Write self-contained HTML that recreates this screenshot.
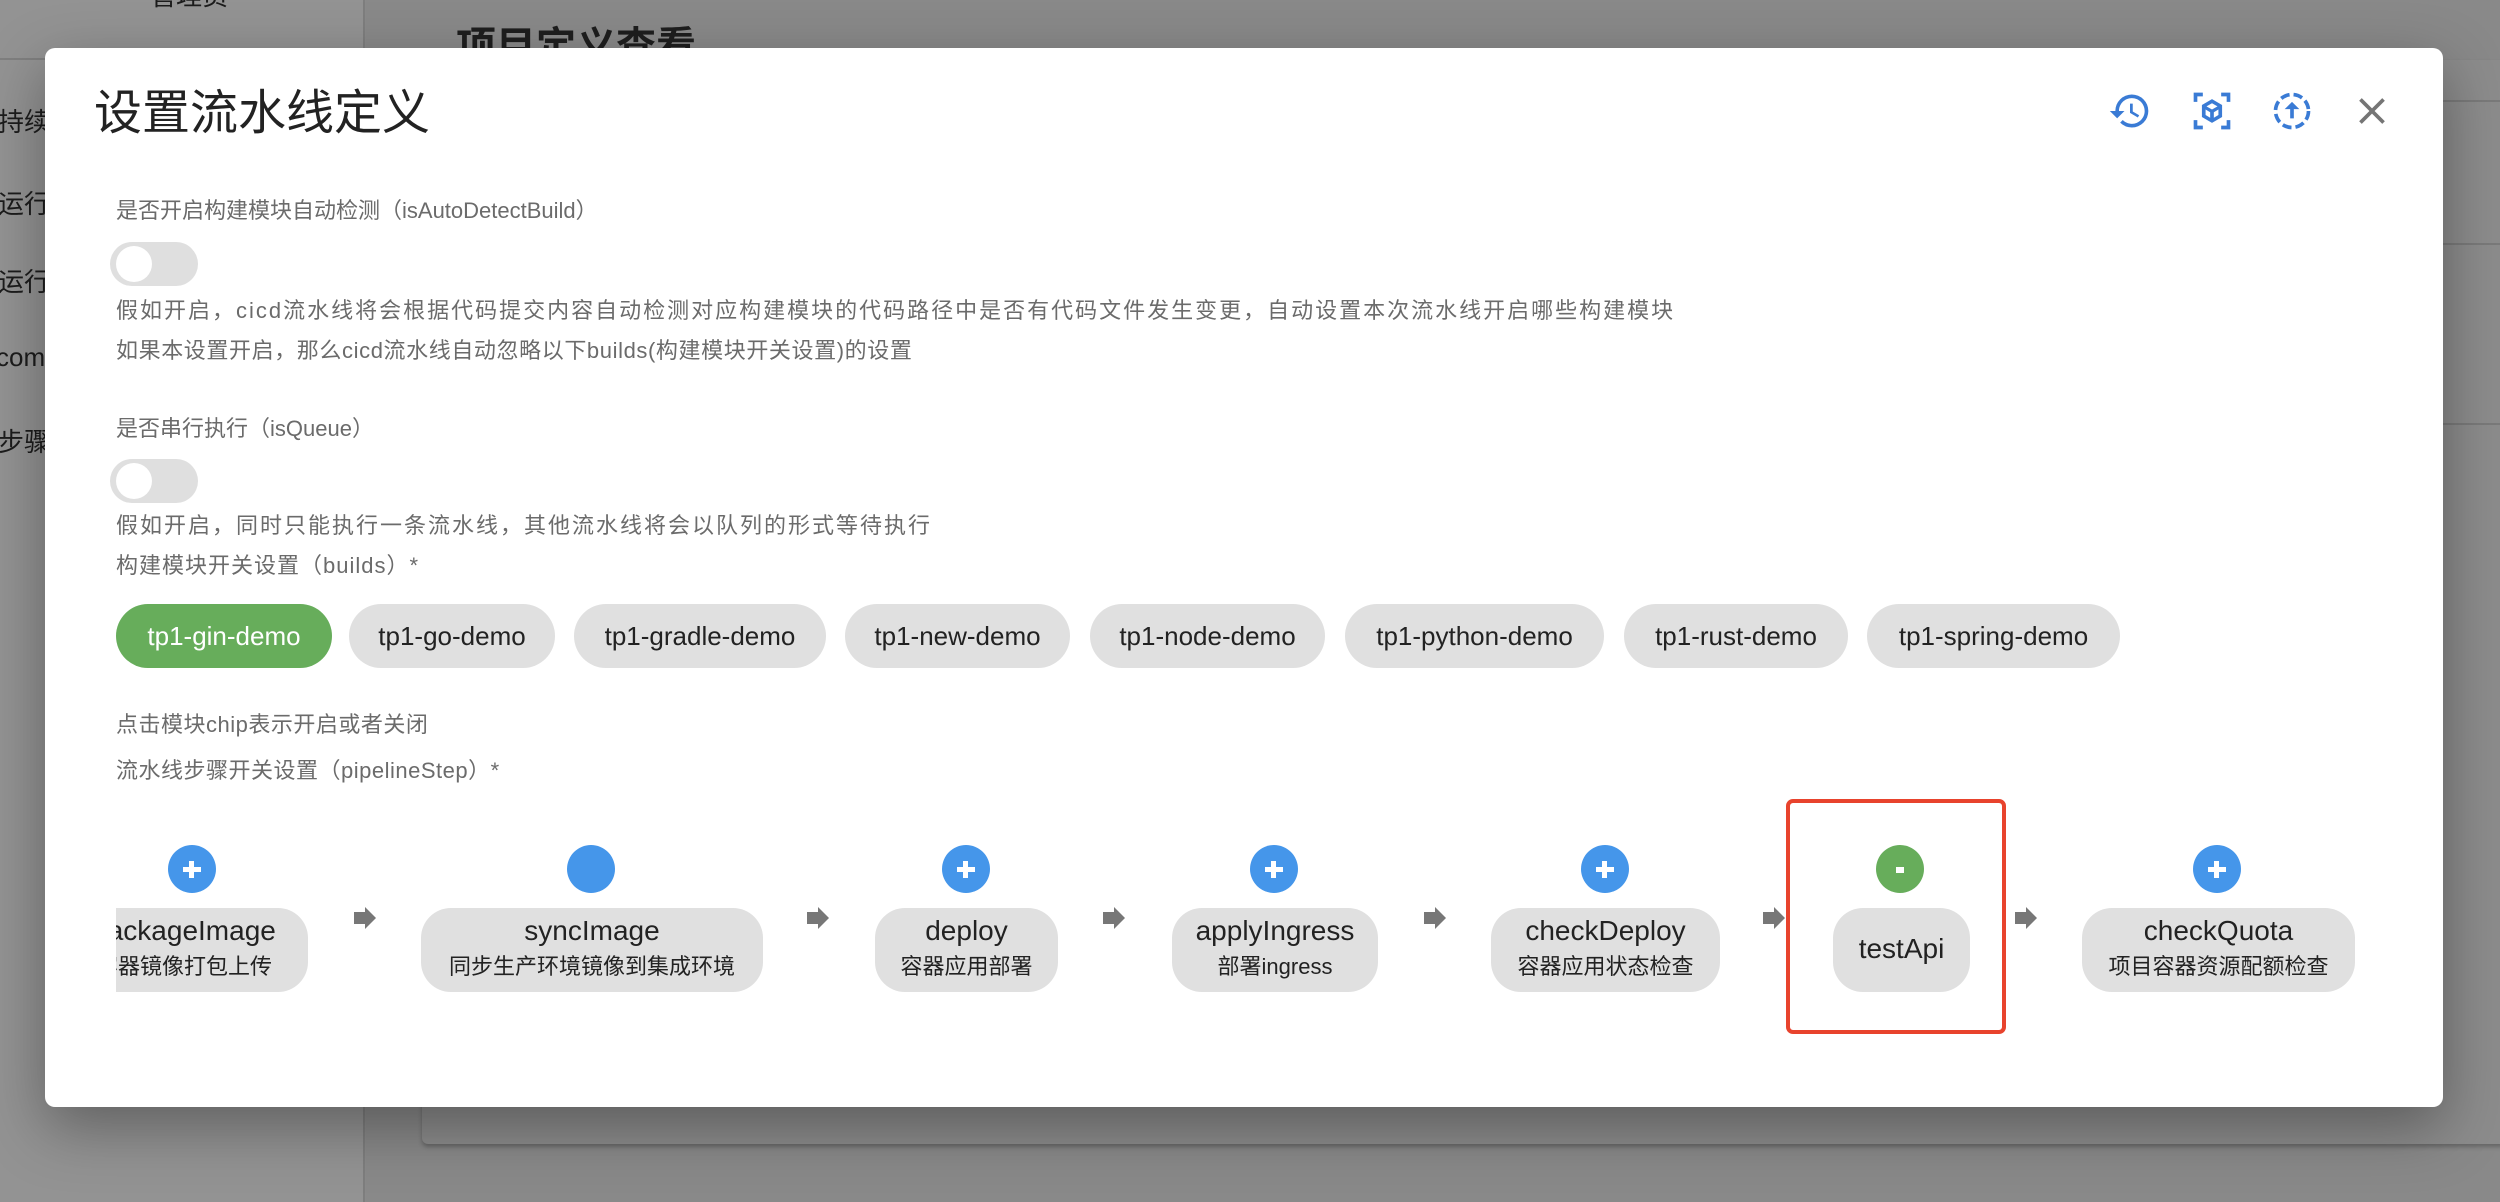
<!DOCTYPE html>
<html><head><meta charset="utf-8">
<style>
*{margin:0;padding:0;box-sizing:border-box}
html,body{background:#8a8a8a}
body{width:2500px;height:1202px;overflow:hidden;font-family:"Liberation Sans","Noto Sans CJK SC",sans-serif;position:relative}
.abs{position:absolute}
.side{left:0;top:0;width:365px;height:1202px;background:#939393;border-right:2px solid #7e7e7e}
.sidetxt{font-size:26px;color:#1c1c1c;white-space:nowrap}
.card{left:422px;top:60px;width:2100px;height:1084px;background:#8c8c8c;border-radius:6px;box-shadow:0 3px 4px rgba(0,0,0,.25)}
.dlg{left:45px;top:48px;width:2398px;height:1059px;background:#fff;border-radius:10px;box-shadow:0 20px 60px rgba(0,0,0,.35)}
.lbl{font-size:22px;color:#6b6b6b;white-space:nowrap;line-height:1}
.tog{width:88px;height:44px;border-radius:22px;background:#dfdfdf}
.tog i{position:absolute;left:6px;top:4px;width:36px;height:36px;border-radius:50%;background:#fff}
.chip{top:604px;height:64px;border-radius:32px;background:#e0e0e0;color:#222;font-size:26px;line-height:64px;text-align:center;white-space:nowrap}
.chip.on{background:#67ad5b;color:#fff}
.circ{width:48px;height:48px;border-radius:50%;background:#4596ea;top:845px}
.circ.p::before{content:"";position:absolute;left:15px;top:22px;width:18px;height:5px;background:#fff}
.circ.p::after{content:"";position:absolute;left:21px;top:16px;width:5px;height:17px;background:#fff}
.box{top:908px;height:84px;border-radius:30px;background:#e0e0e0;text-align:center;color:#222;white-space:nowrap;overflow:hidden}
.box b{display:block;font-weight:normal;font-size:28px;margin-top:6px;line-height:34px}
.box s{display:block;text-decoration:none;font-size:22px;line-height:30px;margin-top:4px}
.arr{top:907px;width:22px;height:22px}
</style></head><body>
<div class="abs side"></div>
<div class="abs" style="left:0;top:58px;width:365px;height:2px;background:#7f7f7f"></div>
<div class="abs sidetxt" style="left:150px;top:-24px">管理员</div>
<div class="abs sidetxt" style="left:-2px;top:102px">持续</div>
<div class="abs sidetxt" style="left:-2px;top:184px">运行</div>
<div class="abs sidetxt" style="left:-2px;top:262px">运行</div>
<div class="abs sidetxt" style="left:-4px;top:342px">com</div>
<div class="abs sidetxt" style="left:-2px;top:422px">步骤</div>
<div class="abs" style="left:366px;top:0;width:2134px;height:1202px;background:#898989"></div>
<div class="abs sidetxt" style="left:456px;top:14px;font-size:40px;font-weight:bold;color:#1e1e1e">项目定义查看</div>
<div class="abs card"></div>
<div class="abs" style="left:2443px;top:100px;width:57px;height:2px;background:#7a7a7a"></div>
<div class="abs" style="left:2443px;top:243px;width:57px;height:2px;background:#7a7a7a"></div>
<div class="abs" style="left:2443px;top:423px;width:57px;height:2px;background:#7a7a7a"></div>
<div class="abs dlg"></div>

<div class="abs" style="left:94px;top:84px;font-size:48px;color:#222;white-space:nowrap;line-height:60px">设置流水线定义</div>

<svg class="abs" style="left:2108px;top:89px" width="44" height="44" viewBox="0 0 24 24"><path fill="#3a7bd5" d="M13 3a9 9 0 0 0-9 9H1l3.890 3.890.07.14L9 12H6c0-3.870 3.130-7 7-7s7 3.130 7 7-3.130 7-7 7c-1.930 0-3.680-.79-4.940-2.060l-1.420 1.420A8.954 8.954 0 0 0 13 21a9 9 0 0 0 0-18zm-1 5v5l4.280 2.540.72-1.210-3.500-2.080V8H12z"/></svg>
<svg class="abs" style="left:2190px;top:89px" width="44" height="44" viewBox="0 0 24 24"><path fill="#3a7bd5" d="M2 2h5v2H4v3H2zm15 0h5v5h-2V4h-3zM2 17h2v3h3v2H2zm18 0h2v5h-5v-2h3zM12 5.5l5.5 3.2v6.6L12 18.5l-5.5-3.2V8.7zm0 2.3L9 9.5l3 1.7 3-1.7zm-3.5 3.4v3l2.5 1.5v-3zm7 0l-2.5 1.5v3l2.5-1.5z"/></svg>
<svg class="abs" style="left:2270px;top:89px" width="44" height="44" viewBox="0 0 24 24"><circle cx="12" cy="12" r="9" fill="none" stroke="#3a7bd5" stroke-width="2" stroke-dasharray="5 2.2"/><path fill="#3a7bd5" d="M12 7l-4 4h3v5h2v-5h3z"/></svg>
<svg class="abs" style="left:2350px;top:89px" width="44" height="44" viewBox="0 0 24 24"><path fill="#757575" d="M19 6.41L17.59 5 12 10.59 6.41 5 5 6.41 10.59 12 5 17.59 6.41 19 12 13.41 17.59 19 19 17.59 13.410 12z"/></svg>

<div class="abs lbl" style="left:116px;top:200px">是否开启构建模块自动检测（isAutoDetectBuild）</div>
<div class="abs tog" style="left:110px;top:242px"><i></i></div>
<div class="abs lbl" style="left:116px;top:300px;letter-spacing:2px">假如开启，cicd流水线将会根据代码提交内容自动检测对应构建模块的代码路径中是否有代码文件发生变更，自动设置本次流水线开启哪些构建模块</div>
<div class="abs lbl" style="left:116px;top:340px;letter-spacing:0.6px">如果本设置开启，那么cicd流水线自动忽略以下builds(构建模块开关设置)的设置</div>
<div class="abs lbl" style="left:116px;top:418px">是否串行执行（isQueue）</div>
<div class="abs tog" style="left:110px;top:459px"><i></i></div>
<div class="abs lbl" style="left:116px;top:515px;letter-spacing:2px">假如开启，同时只能执行一条流水线，其他流水线将会以队列的形式等待执行</div>
<div class="abs lbl" style="left:116px;top:555px;letter-spacing:1px">构建模块开关设置（builds）*</div>

<div class="abs chip on" style="left:116px;width:216px">tp1-gin-demo</div>
<div class="abs chip" style="left:349px;width:206px">tp1-go-demo</div>
<div class="abs chip" style="left:574px;width:252px">tp1-gradle-demo</div>
<div class="abs chip" style="left:845px;width:225px">tp1-new-demo</div>
<div class="abs chip" style="left:1090px;width:235px">tp1-node-demo</div>
<div class="abs chip" style="left:1345px;width:259px">tp1-python-demo</div>
<div class="abs chip" style="left:1624px;width:224px">tp1-rust-demo</div>
<div class="abs chip" style="left:1867px;width:253px">tp1-spring-demo</div>

<div class="abs lbl" style="left:116px;top:714px;letter-spacing:0.5px">点击模块chip表示开启或者关闭</div>
<div class="abs lbl" style="left:116px;top:760px;letter-spacing:0.5px">流水线步骤开关设置（pipelineStep）*</div>

<div class="abs circ p" style="left:168px"></div>
<div class="abs circ" style="left:567px"></div>
<div class="abs circ p" style="left:942px"></div>
<div class="abs circ p" style="left:1250px"></div>
<div class="abs circ p" style="left:1581px"></div>
<div class="abs circ" style="left:1876px;background:#67ad5b"><i style="position:absolute;left:20px;top:22px;width:8px;height:6px;background:#fff"></i></div>
<div class="abs circ p" style="left:2193px"></div>

<div class="abs" style="left:116px;top:908px;width:192px;height:84px;overflow:hidden">
 <div class="box" style="position:absolute;left:-56px;top:0;width:248px"><b>packageImage</b><s>容器镜像打包上传</s></div>
</div>
<div class="abs box" style="left:421px;width:342px"><b>syncImage</b><s>同步生产环境镜像到集成环境</s></div>
<div class="abs box" style="left:875px;width:183px"><b>deploy</b><s>容器应用部署</s></div>
<div class="abs box" style="left:1172px;width:206px"><b>applyIngress</b><s>部署ingress</s></div>
<div class="abs box" style="left:1491px;width:229px"><b>checkDeploy</b><s>容器应用状态检查</s></div>
<div class="abs box" style="left:1833px;width:137px"><b style="margin-top:24px">testApi</b></div>
<div class="abs box" style="left:2082px;width:273px"><b>checkQuota</b><s>项目容器资源配额检查</s></div>

<svg class="abs arr" style="left:354px" viewBox="0 0 22 22"><path fill="#777" d="M0 5h11V0l11 11-11 11v-5H0z"/></svg>
<svg class="abs arr" style="left:807px" viewBox="0 0 22 22"><path fill="#777" d="M0 5h11V0l11 11-11 11v-5H0z"/></svg>
<svg class="abs arr" style="left:1103px" viewBox="0 0 22 22"><path fill="#777" d="M0 5h11V0l11 11-11 11v-5H0z"/></svg>
<svg class="abs arr" style="left:1424px" viewBox="0 0 22 22"><path fill="#777" d="M0 5h11V0l11 11-11 11v-5H0z"/></svg>
<svg class="abs arr" style="left:1763px" viewBox="0 0 22 22"><path fill="#777" d="M0 5h11V0l11 11-11 11v-5H0z"/></svg>
<svg class="abs arr" style="left:2015px" viewBox="0 0 22 22"><path fill="#777" d="M0 5h11V0l11 11-11 11v-5H0z"/></svg>

<div class="abs" style="left:1786px;top:799px;width:220px;height:235px;border:4px solid #e8432d;border-radius:7px"></div>
</body></html>
